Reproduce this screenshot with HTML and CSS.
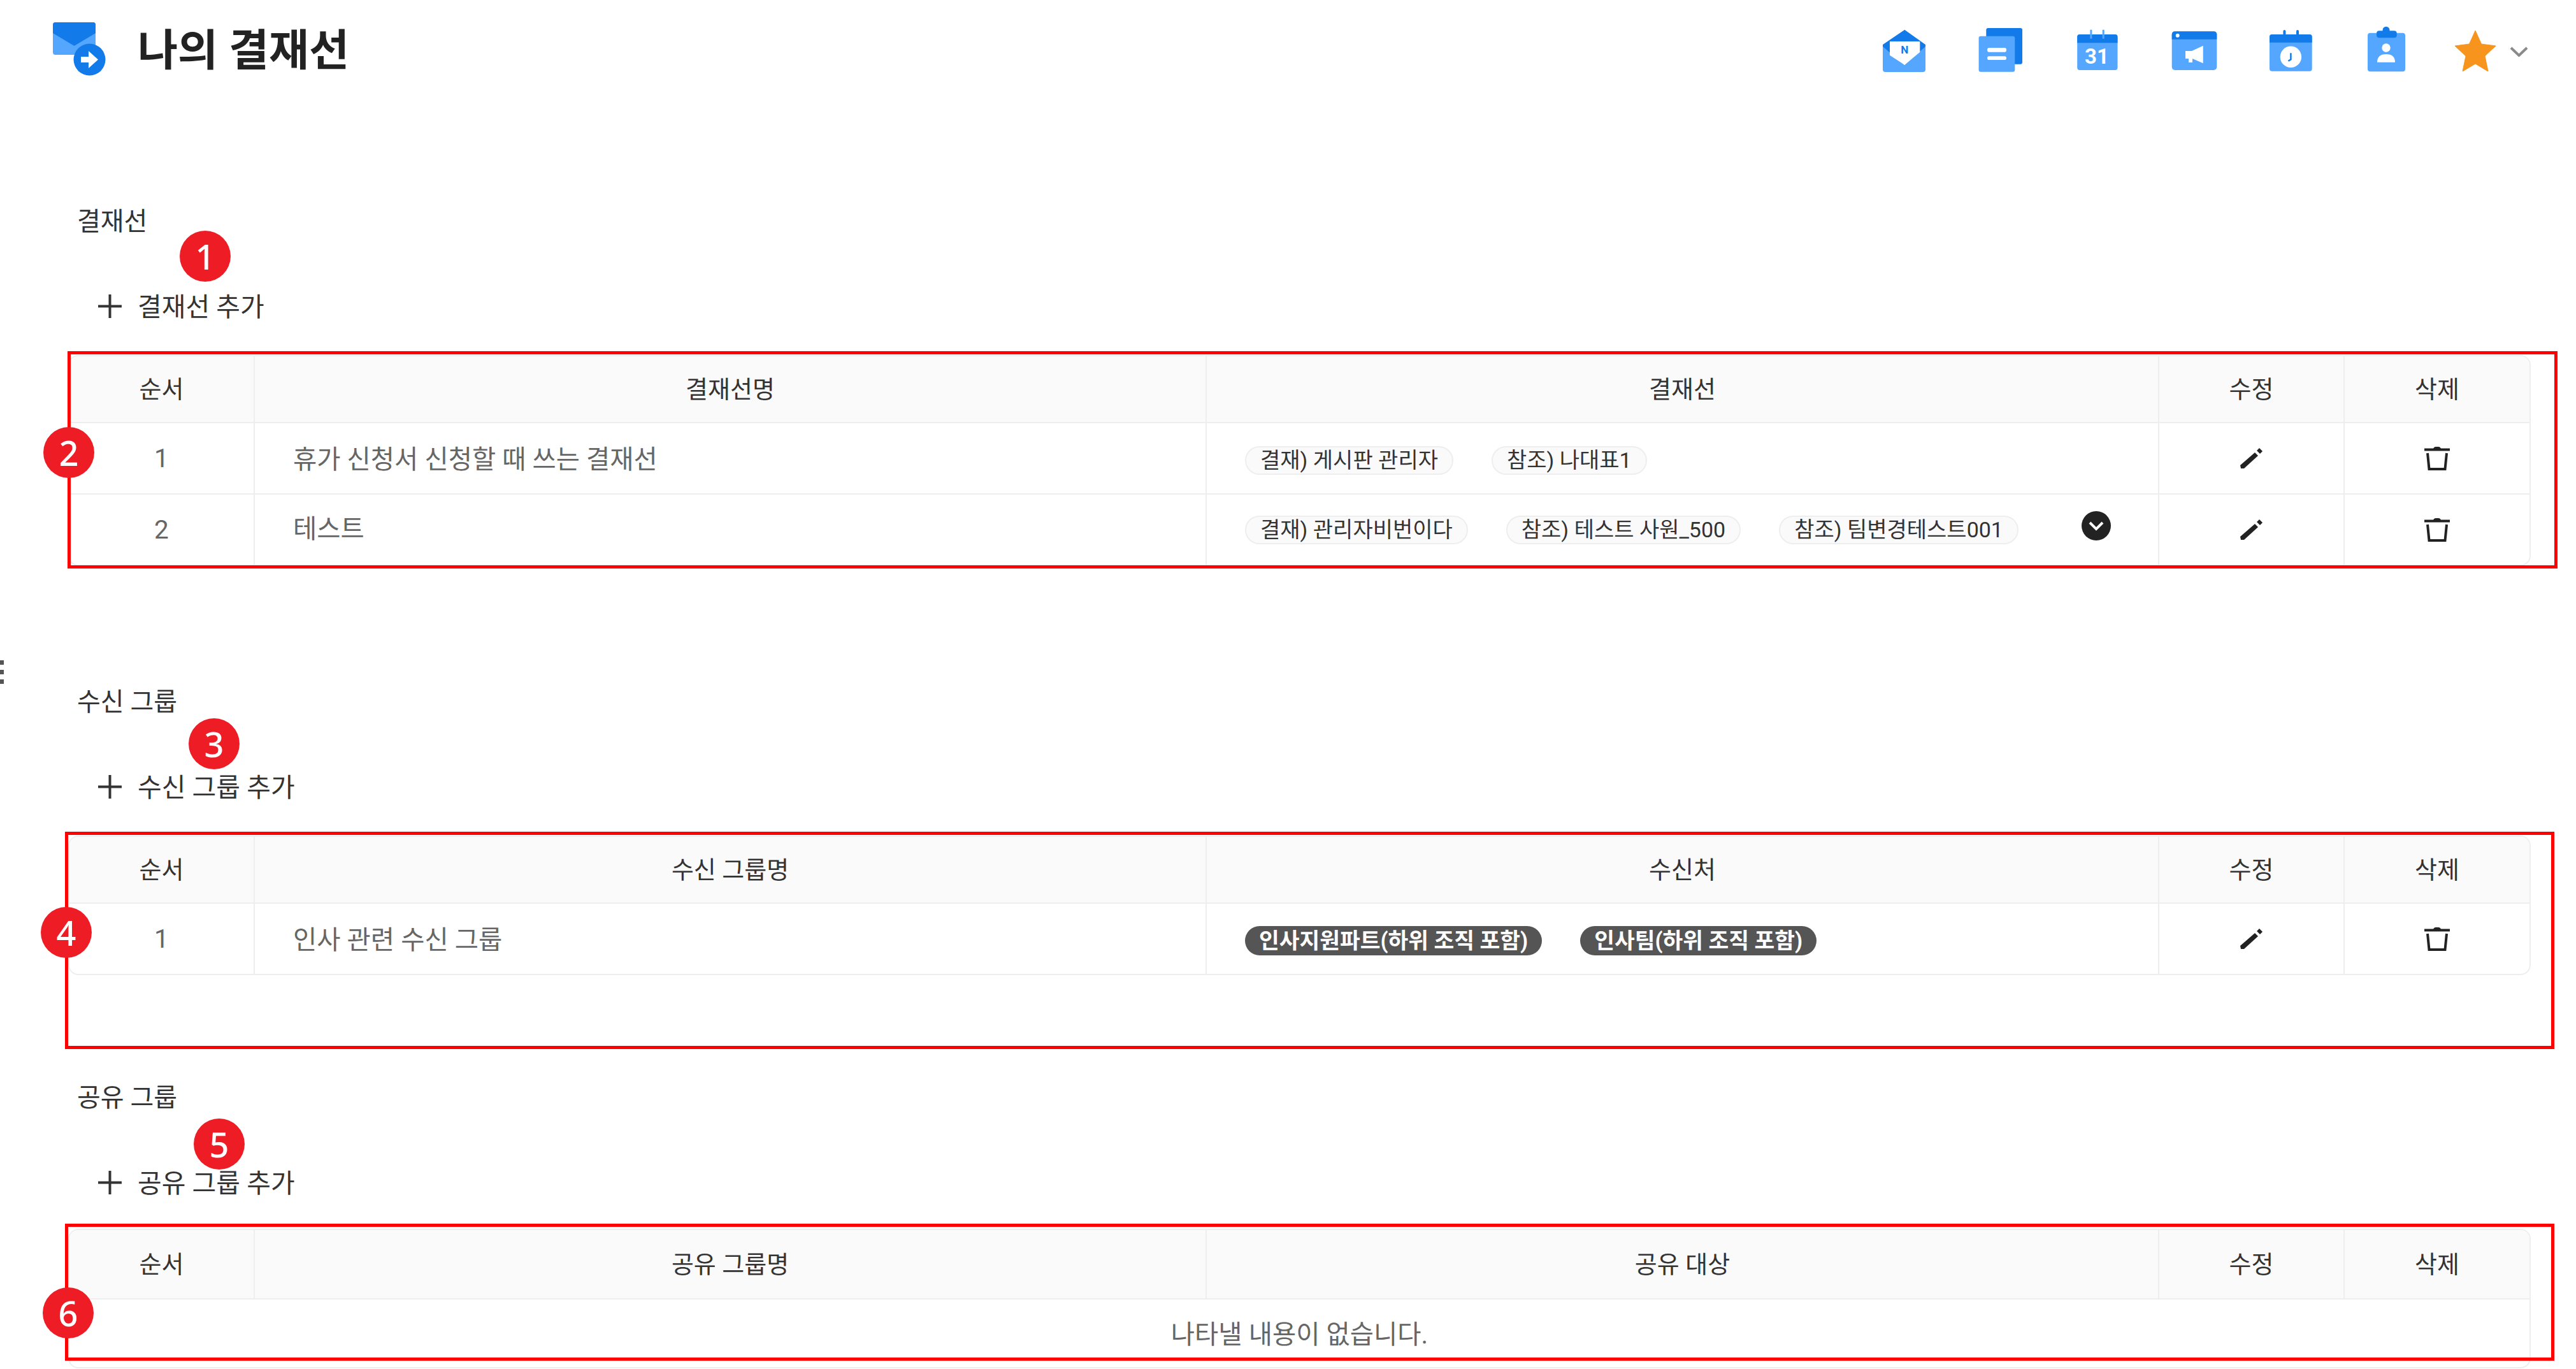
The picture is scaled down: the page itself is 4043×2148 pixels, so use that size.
FILE: index.html
```html
<!DOCTYPE html>
<html lang="ko">
<head>
<meta charset="utf-8">
<title>나의 결재선</title>
<link rel="stylesheet" href="styles.css">
</head>
<body>
<svg class="defs" width="0" height="0" aria-hidden="true">
  <symbol id="i-pencil" viewBox="0 0 35 32"><path d="M0 27 23 7l5 5L6 32H1Z"/><path d="M26 4l4-4 5 5-4 4Z"/></symbol>
  <symbol id="i-trash" viewBox="0 0 40 38"><path class="st" d="M0 5.500H40M5 11l2.500 25h25L35 11"/><path d="M14 4q1-3 4-3h4q3 0 4 3Z"/></symbol>
  <symbol id="i-plus" viewBox="0 0 37 37"><path class="st" d="M0 18.500H37M18.500 0V37"/></symbol>
</svg>
<header class="header">
  <div class="brand">
    <svg class="logo" viewBox="0 0 90 90">
      <rect class="lt" x="3" y="0" width="67" height="51" rx="4"/>
      <path class="dk" d="M3 17V4q0-4 4-4h59q4 0 4 4v13L36.500 37Z"/>
      <circle class="dk" cx="60.500" cy="58.500" r="25"/>
      <path class="wh" d="M47 54h12v-9l15 13.500L59 72v-9H47Z"/>
    </svg>
    <h1 class="title">나의 결재선</h1>
  </div>
  <nav class="tools">
    <span class="tool"><svg class="tool-icon" viewBox="0 0 80 80">
      <path class="dk" d="M41.300 6.700 74 30v22H7V30Z"/>
      <path class="lt" d="M7 33 41 62 74 33V69q0 4-4 4H11q-4 0-4-4Z"/>
      <path class="wh" d="M18 25H65.300V41.700L41.300 61.700 18 46.700Z"/>
      <text class="tx-n" x="41.300" y="44" text-anchor="middle">N</text>
    </svg></span>
    <span class="tool"><svg class="tool-icon" viewBox="0 0 80 80">
      <rect class="dk" x="17.300" y="4" width="56.700" height="56.700" rx="3"/>
      <rect class="lt" x="5.600" y="16.700" width="56.700" height="56" rx="3"/>
      <rect class="wh" x="19" y="35" width="30" height="6.700" rx="3"/>
      <rect class="wh" x="19" y="48.300" width="30" height="5.700" rx="2.800"/>
    </svg></span>
    <span class="tool"><svg class="tool-icon" viewBox="0 0 80 80">
      <rect class="lt" x="9.200" y="14" width="63.300" height="56" rx="4"/>
      <path class="dk" d="M9.200 27.300V18q0-4 4-4h55.300q4 0 4 4v9.300Z"/>
      <rect class="lt" x="29.400" y="6.700" width="3" height="14"/>
      <rect class="lt" x="48.700" y="6.700" width="3" height="14"/>
      <text class="tx-31" x="40" y="60" text-anchor="middle">31</text>
    </svg></span>
    <span class="tool"><svg class="tool-icon" viewBox="0 0 80 80">
      <rect class="lt" x="5.700" y="9.300" width="70.600" height="60.700" rx="5"/>
      <path class="dk" d="M5.700 21.700V14.300q0-5 5-5h60.600q5 0 5 5v7.400Z"/>
      <circle class="wh" cx="14.700" cy="15.700" r="3"/>
      <path class="wh" d="M27 40H37L54.700 31.700V59.300L38 52V58H32V52H27Z"/>
    </svg></span>
    <span class="tool"><svg class="tool-icon" viewBox="0 0 80 80">
      <rect class="lt" x="8" y="14" width="66.700" height="57.700" rx="4"/>
      <path class="dk" d="M8 26.700V18q0-4 4-4h58.700q4 0 4 4v8.700Z"/>
      <rect class="dk" x="29.400" y="7" width="4" height="9" rx="2"/>
      <rect class="dk" x="50" y="7" width="4" height="9" rx="2"/>
      <circle class="wh" cx="41.400" cy="49.300" r="16.700"/>
      <path class="hand" d="M41.400 43.300V53.300L37.400 55.700"/>
    </svg></span>
    <span class="tool"><svg class="tool-icon" viewBox="0 0 80 80">
      <rect class="lt" x="11" y="11.700" width="59" height="60.600" rx="4"/>
      <circle class="dk" cx="40" cy="7.200" r="5.500"/>
      <rect class="dk" x="25" y="8.300" width="31.700" height="11" rx="4"/>
      <circle class="wh" cx="40" cy="35" r="6.700"/>
      <path class="wh" d="M26 57.700Q26 45 40 45 54 45 54 57.700Z"/>
    </svg></span>
    <svg class="star" viewBox="0 0 64 64"><path d="M32 0 41.500 21 64 24 47 40 52 64 32 52 12 64 17 40 0 24 22.500 21Z"/></svg>
    <svg class="caret" viewBox="0 0 29 16"><path d="M2 2 14.500 14 27 2"/></svg>
  </nav>
</header>
<main>
  <section class="section s1">
    <h2 class="label">결재선</h2>
    <div class="add"><svg class="plus"><use href="#i-plus"/></svg><span class="add-text">결재선 추가</span></div>
    <table class="grid">
      <colgroup><col class="c1"><col class="c2"><col class="c3"><col class="c4"><col class="c5"></colgroup>
      <thead><tr><th>순서</th><th>결재선명</th><th>결재선</th><th>수정</th><th>삭제</th></tr></thead>
      <tbody>
        <tr class="first">
          <td>1</td>
          <td class="name">휴가 신청서 신청할 때 쓰는 결재선</td>
          <td><div class="chips"><span class="chip">결재) 게시판 관리자</span><span class="chip">참조) 나대표1</span></div></td>
          <td><svg class="pencil"><use href="#i-pencil"/></svg></td>
          <td><svg class="trash"><use href="#i-trash"/></svg></td>
        </tr>
        <tr class="second">
          <td>2</td>
          <td class="name">테스트</td>
          <td><div class="chips"><span class="chip">결재) 관리자비번이다</span><span class="chip">참조) 테스트 사원_500</span><span class="chip">참조) 팀변경테스트001</span>
            <svg class="more" viewBox="0 0 46 46"><circle cx="23" cy="23" r="23"/><path d="M13 18 23 28 33 18"/></svg></div></td>
          <td><svg class="pencil"><use href="#i-pencil"/></svg></td>
          <td><svg class="trash"><use href="#i-trash"/></svg></td>
        </tr>
      </tbody>
    </table>
    <div class="mark-box"></div>
    <span class="num n1">1</span>
    <span class="num n2">2</span>
  </section>

  <section class="section s2">
    <div class="handle"><i></i><i></i><i></i></div>
    <h2 class="label">수신 그룹</h2>
    <div class="add"><svg class="plus"><use href="#i-plus"/></svg><span class="add-text">수신 그룹 추가</span></div>
    <table class="grid">
      <colgroup><col class="c1"><col class="c2"><col class="c3"><col class="c4"><col class="c5"></colgroup>
      <thead><tr><th>순서</th><th>수신 그룹명</th><th>수신처</th><th>수정</th><th>삭제</th></tr></thead>
      <tbody>
        <tr class="first">
          <td>1</td>
          <td class="name">인사 관련 수신 그룹</td>
          <td><div class="chips"><span class="chip dark">인사지원파트(하위 조직 포함)</span><span class="chip dark">인사팀(하위 조직 포함)</span></div></td>
          <td><svg class="pencil"><use href="#i-pencil"/></svg></td>
          <td><svg class="trash"><use href="#i-trash"/></svg></td>
        </tr>
      </tbody>
    </table>
    <div class="mark-box"></div>
    <span class="num n3">3</span>
    <span class="num n4">4</span>
  </section>

  <section class="section s3">
    <h2 class="label">공유 그룹</h2>
    <div class="add"><svg class="plus"><use href="#i-plus"/></svg><span class="add-text">공유 그룹 추가</span></div>
    <table class="grid">
      <colgroup><col class="c1"><col class="c2"><col class="c3"><col class="c4"><col class="c5"></colgroup>
      <thead><tr><th>순서</th><th>공유 그룹명</th><th>공유 대상</th><th>수정</th><th>삭제</th></tr></thead>
      <tbody>
        <tr><td class="empty" colspan="5">나타낼 내용이 없습니다.</td></tr>
      </tbody>
    </table>
    <div class="mark-box"></div>
    <span class="num n5">5</span>
    <span class="num n6">6</span>
  </section>
</main>
</body>
</html>
```
FILE: styles.css
```css
* { box-sizing: border-box; }
html, body { margin: 0; height: 2148px; overflow: hidden; background: #fff; }
body { font-family: Roboto, "Noto Sans CJK KR", sans-serif; font-size: 40px; color: #333; }
.defs { position: absolute; }
.dk { fill: #127be9; }
.lt { fill: #55a6ff; }
.wh { fill: #fff; }

.header { display: flex; justify-content: space-between; align-items: center; height: 120px; padding: 40px 75px 0 80px; }
.brand { display: flex; align-items: center; }
.logo { width: 90px; height: 90px; }
.title { margin: 0 0 0 46px; font-size: 68.500px; font-weight: 700; line-height: 80px; color: #222; }
.tools { display: flex; align-items: center; }
.tool { display: flex; justify-content: center; width: 151.400px; }
.tool-icon { width: 80px; height: 80px; }
.tx-n { font: 700 17px Roboto, sans-serif; fill: #127be9; }
.tx-31 { font: 700 33px Roboto, sans-serif; fill: #fff; }
.hand { fill: none; stroke: #127be9; stroke-width: 2.500px; }
.star { width: 64px; height: 64px; margin-left: 32px; }
.star path { fill: #f7941d; stroke: #f7941d; stroke-width: 1px; stroke-linejoin: round; }
.caret { width: 29px; height: 16px; margin-left: 22px; margin-top: 2px; }
.caret path { fill: none; stroke: #8a8a8a; stroke-width: 4px; }

.section { position: relative; padding-left: 107px; }
.s1 { margin-top: 204px; }
.s2 { margin-top: 190px; }
.s3 { margin-top: 169px; }
.label { margin: 0 0 0 14px; font-size: 40px; font-weight: 400; line-height: 48px; color: #333; }
.add { display: flex; align-items: center; gap: 25px; height: 48px; margin: 84px 0 53px 47px; font-size: 41px; color: #333; }
.add-text { padding-bottom: 4px; }
.s3 .add { margin-bottom: 49px; }
.plus { width: 37px; height: 37px; }
.st { fill: none; stroke: currentColor; stroke-width: 4px; }

.grid { width: 3865px; table-layout: fixed; border-collapse: separate; border-spacing: 0; border: 2px solid #eee; border-radius: 16px; font-size: 40.500px; }
.c1 { width: 291px; }
.c2 { width: 1494px; }
.c3 { width: 1495px; }
.c4 { width: 291px; }
.c5 { width: 290px; }
.grid th { height: 105px; padding: 0 0 6px; background: #fafafa; font-size: 38px; font-weight: 400; color: #333; border-right: 2px solid #eee; border-bottom: 2px solid #eee; }
.s3 .grid th { height: 109px; }
.grid th:first-child { border-top-left-radius: 14px; }
.grid th:last-child { border-top-right-radius: 14px; border-right: 0; }
.grid td { height: 110px; padding: 0; text-align: center; color: #666; border-right: 2px solid #eee; border-bottom: 2px solid #eee; }
.s1 .first td { height: 112px; }
.grid td:last-child { border-right: 0; }
.grid tbody tr:last-child td { border-bottom: 0; }
.grid td.name { padding: 0 0 4px 60px; text-align: left; }
.grid .second td.name { padding-bottom: 9px; }
.grid td.empty { height: 106px; padding-bottom: 3px; }

.chips { display: flex; align-items: center; gap: 60px; padding: 0 74px 0 60px; }
.first .chips { padding-top: 6px; }
.chip { height: 45px; padding: 0 22px; border: 2px solid #eee; border-radius: 23px; background: #fafafa; font-size: 34px; line-height: 41px; color: #333; white-space: nowrap; }
.chip.dark { height: 46px; border: 0; background: #555; font-size: 34.500px; color: #fff; font-weight: 700; line-height: 46px; }
.more { width: 46px; height: 46px; margin: -12px 0 0 auto; }
.more circle { fill: #222; }
.more path { fill: none; stroke: #fff; stroke-width: 4px; }
.pencil { display: block; width: 35px; height: 32px; margin: 0 auto; fill: #222; }
.trash { display: block; width: 40px; height: 38px; margin: 0 auto; fill: #222; color: #222; }
.trash .st { stroke-width: 2.500px; }

.mark-box { position: absolute; top: 227px; height: 341px; border: 5px solid #f00; pointer-events: none; }
.s1 .mark-box { left: 106px; width: 3908px; }
.s2 .mark-box { left: 102px; width: 3907px; }
.s3 .mark-box { top: 221px; left: 102px; width: 3907px; height: 215px; }

.num { position: absolute; display: flex; align-items: center; justify-content: center; width: 80px; height: 80px; border-radius: 50%; background: #ee1c25; color: #fff; font: 500 54px "Noto Sans", sans-serif; }
.n1 { left: 282px; top: 38px; }
.n2 { left: 68px; top: 346px; }
.n3 { left: 296px; top: 49px; }
.n4 { left: 64px; top: 345px; }
.n5 { left: 304px; top: 56px; }
.n6 { left: 67px; top: 321px; }

.handle { position: absolute; left: 0; top: -42px; display: flex; flex-direction: column; gap: 8px; }
.handle i { display: block; width: 6px; height: 7px; background: #555; }
```
